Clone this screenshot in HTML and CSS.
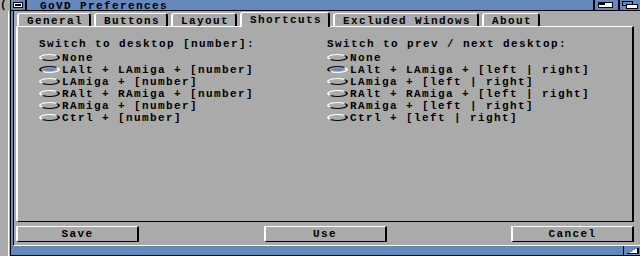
FILE: index.html
```html
<!DOCTYPE html>
<html lang="en">
<head>
    <meta charset="UTF-8">
    <title>GoVD Preferences</title>
    <link rel="stylesheet" href="styles.css">
</head>
<body>
    <div class="behind">
        <div class="behind-title">(</div>
        <div class="behind-edge"></div>
    </div>

    <div class="window">
        <div class="titlebar">
            <div class="close-gadget"><span class="close-box"></span></div>
            <span class="title">GoVD Preferences</span>
            <svg class="depth-gadgets" width="48" height="10" viewBox="0 0 48 10" shape-rendering="crispEdges">
                <rect x="1" y="0" width="2" height="10" fill="#000"/>
                <rect x="6.5" y="2.5" width="14" height="5" fill="#fff" stroke="#000"/>
                <rect x="7" y="3" width="6" height="2" fill="#000"/>
                <rect x="26" y="0" width="2" height="10" fill="#000"/>
                <rect x="30.5" y="1.5" width="10" height="4" fill="#6688bb" stroke="#000"/>
                <rect x="34.5" y="4.5" width="11" height="4" fill="#fff" stroke="#000"/>
            </svg>
        </div>

        <div class="content">
            <div class="tabs">
                <div class="tab">General</div>
                <div class="tab">Buttons</div>
                <div class="tab">Layout</div>
                <div class="tab active">Shortcuts</div>
                <div class="tab">Excluded Windows</div>
                <div class="tab">About</div>
            </div>

            <div class="panel">
                <div class="group">
                    <div class="group-title">Switch to desktop [number]:</div>
                    <div class="radio-list">
                        <div class="option"><span class="radio"></span>None</div>
                        <div class="option"><span class="radio checked"></span>LAlt + LAmiga + [number]</div>
                        <div class="option"><span class="radio"></span>LAmiga + [number]</div>
                        <div class="option"><span class="radio"></span>RAlt + RAmiga + [number]</div>
                        <div class="option"><span class="radio"></span>RAmiga + [number]</div>
                        <div class="option"><span class="radio"></span>Ctrl + [number]</div>
                    </div>
                </div>
                <div class="group">
                    <div class="group-title">Switch to prev / next desktop:</div>
                    <div class="radio-list">
                        <div class="option"><span class="radio"></span>None</div>
                        <div class="option"><span class="radio checked"></span>LAlt + LAmiga + [left | right]</div>
                        <div class="option"><span class="radio"></span>LAmiga + [left | right]</div>
                        <div class="option"><span class="radio"></span>RAlt + RAmiga + [left | right]</div>
                        <div class="option"><span class="radio"></span>RAmiga + [left | right]</div>
                        <div class="option"><span class="radio"></span>Ctrl + [left | right]</div>
                    </div>
                </div>
            </div>

            <div class="buttons">
                <div class="button">Save</div>
                <div class="button">Use</div>
                <div class="button">Cancel</div>
            </div>
        </div>

        <div class="bottom-bar">
            <svg class="size-gadget" width="17" height="9" viewBox="0 0 17 9" shape-rendering="crispEdges">
                <rect x="0" y="0" width="1" height="9" fill="#000"/>
                <polygon points="4,8 15,8 15,2" fill="#fff"/>
                <rect x="4" y="7" width="12" height="1" fill="#000"/>
                <rect x="14" y="2" width="2" height="6" fill="#000"/>
            </svg>
        </div>
    </div>
</body>
</html>
```

FILE: styles.css
```css
body {
    margin: 0;
    width: 640px;
    height: 256px;
    overflow: hidden;
    display: flex;
    background-color: #aaa;
    color: #000;
    font-family: 'Liberation Mono', 'DejaVu Sans Mono', monospace;
    font-weight: bold;
    font-size: 11px;
    letter-spacing: 1.4px;
    line-height: 8px;
}

/* strip of the window lying behind */
.behind {
    width: 10px;
    display: flex;
    flex-direction: column;
}

.behind-title {
    height: 11px;
    padding-top: 1px;
    box-sizing: border-box;
    letter-spacing: 0;
}

.behind-edge {
    flex: 1;
    width: 8px;
    border-right: 1px solid #fff;
}

.window {
    flex: 1;
    display: flex;
    flex-direction: column;
    background-color: #6688bb;
    border-left: 1px solid #000;
}

.titlebar {
    height: 10px;
    border-bottom: 1px solid #000;
    display: flex;
    align-items: center;
}

.close-gadget {
    width: 14px;
    height: 10px;
    border-right: 2px solid #000;
    display: flex;
    align-items: center;
    justify-content: center;
}

.close-box {
    width: 10px;
    height: 6px;
    box-sizing: border-box;
    border: 1px solid #000;
    background-color: #000;
    box-shadow: inset 0 0 0 1px #fff;
}

.title {
    margin-left: 13px;
    padding-top: 1px;
}

.depth-gadgets {
    margin-left: auto;
    display: block;
}

.content {
    flex: 1;
    display: flex;
    flex-direction: column;
    background-color: #aaa;
    margin-left: 2px;
    border-left: 1px solid #000;
    border-bottom: 1px solid #fff;
    padding: 1px 6px 3px 2px;
}

.tabs {
    display: flex;
    align-items: flex-end;
    gap: 3px;
    height: 14px;
    margin-left: 1px;
}

.tab {
    border-style: solid;
    border-width: 1px 2px 0 2px;
    border-color: #fff #000 #000 #fff;
    border-radius: 3px 3px 0 0;
    padding: 3px 6px 1px 8px;
}

.tab.active {
    padding-bottom: 3px;
    margin-bottom: -1px;
    background-color: #aaa;
    position: relative;
    z-index: 1;
}

.panel {
    flex: 1;
    border-style: solid;
    border-width: 1px 2px;
    border-color: #fff #000 #000 #fff;
    padding: 13px 0 0 21px;
    display: grid;
    grid-template-columns: 288px 1fr;
    align-content: start;
}

.group-title {
    margin-bottom: 6px;
}

.radio-list {
    display: flex;
    flex-direction: column;
    gap: 4px;
}

.option {
    display: flex;
    align-items: flex-start;
    gap: 2px;
    height: 8px;
}

.radio {
    width: 21px;
    height: 7px;
    box-sizing: border-box;
    border-style: solid;
    border-width: 1px 2px;
    border-color: #fff #000 #000 #fff;
    border-radius: 50%;
    position: relative;
}

.radio.checked {
    border-color: #000 #fff #fff #000;
}

.radio.checked::after {
    content: "";
    position: absolute;
    left: 2px;
    top: 1px;
    width: 13px;
    height: 3px;
    border-radius: 50%;
    background-color: #6688bb;
}

.buttons {
    display: flex;
    justify-content: space-between;
    margin-top: 4px;
}

.button {
    width: 123px;
    box-sizing: border-box;
    border-style: solid;
    border-width: 1px 2px;
    border-color: #fff #000 #000 #fff;
    padding: 3px 0;
    text-align: center;
}

.bottom-bar {
    height: 9px;
    border-bottom: 1px solid #000;
    display: flex;
    justify-content: flex-end;
}

.size-gadget {
    display: block;
}
```
